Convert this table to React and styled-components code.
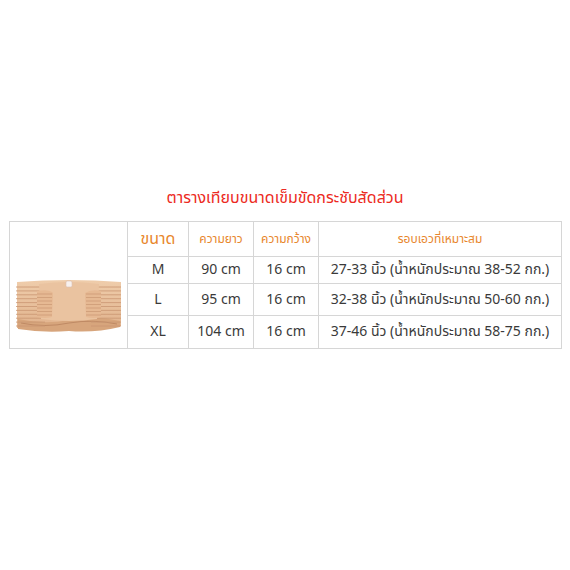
import React from "react";
import styled, { createGlobalStyle } from "styled-components";

const Global = createGlobalStyle`
  html, body { margin: 0; padding: 0; background: #ffffff; }
  body { font-family: "Noto Sans Thai", "Noto Sans", "DejaVu Sans", sans-serif; }
`;

const Page = styled.div`
  width: 570px;
  height: 570px;
  display: flex;
  flex-direction: column;
  align-items: stretch;
  padding: 187px 9px 0 9px;
  box-sizing: border-box;
`;

const Title = styled.h1`
  margin: 0 0 12px 0;
  font-size: 16px;
  line-height: 22px;
  font-weight: 400;
  color: #ec2a22;
  text-align: center;
`;

const Table = styled.table`
  width: 552px;
  border-collapse: collapse;
  table-layout: fixed;
  border: 1px solid #dcdcdc;
`;

const Cell = styled.td`
  border: 1px solid #d6d6d6;
  padding: 0;
  text-align: center;
  vertical-align: middle;
  color: #3a3a3a;
  font-size: 14px;
  font-weight: 400;
  line-height: 18px;
  height: ${(p) => p.$h}px;
  box-sizing: border-box;
  white-space: nowrap;
`;

const HeadCell = styled(Cell)`
  color: #e8862c;
  font-size: ${(p) => (p.$big ? 16 : 12)}px;
`;

const ImageCell = styled.td`
  border: 1px solid #d6d6d6;
  padding: 0;
  vertical-align: bottom;
  text-align: center;
`;

const BeltBox = styled.div`
  display: flex;
  justify-content: center;
  padding: 0 0 14px 0;
`;

function Belt() {
  const stripes = [];
  for (let i = 0; i < 11; i++) {
    const y = 11 + i * 3.9;
    stripes.push(
      <line key={"l" + i} x1="1" y1={y} x2="30" y2={y} stroke="#c99672" strokeWidth="0.8" />,
      <line key={"r" + i} x1="76" y1={y} x2="106" y2={y} stroke="#c99672" strokeWidth="0.8" />
    );
  }
  return (
    <svg width="108" height="58" viewBox="0 0 108 58">
      <defs>
        <linearGradient id="bg" x1="0" y1="0" x2="0" y2="1">
          <stop offset="0" stopColor="#efcdab" />
          <stop offset="1" stopColor="#e0b18b" />
        </linearGradient>
      </defs>
      <path d="M2 6 Q54 2 106 6 L106 50 Q80 56 54 54 Q28 56 2 52 Z" fill="url(#bg)" />
      <path d="M3 43 Q30 49 54 44 Q80 39 105 45 L105 51 Q80 57 54 55 Q28 57 3 53 Z" fill="#d7a57c" />
      <path d="M6 47 Q30 52 54 47 Q78 43 102 48" stroke="#b9835e" strokeWidth="0.8" fill="none" />
      {stripes}
      <path d="M24 8 Q54 4 84 8 L82 43 Q54 47 26 43 Z" fill="#eac3a0" />
      <path d="M22 15 Q34 13 38 17 L37 41 Q30 43 22 41 Z" fill="#e6b993" />
      <path d="M70 17 Q76 13 86 15 L86 41 Q78 43 71 41 Z" fill="#e6b993" />
      {[0, 1, 2, 3, 4, 5, 6].map((i) => (
        <g key={i}>
          <line x1="22" y1={18 + i * 3.5} x2="37" y2={18 + i * 3.5} stroke="#c99672" strokeWidth="0.7" />
          <line x1="71" y1={18 + i * 3.5} x2="86" y2={18 + i * 3.5} stroke="#c99672" strokeWidth="0.7" />
        </g>
      ))}
      <rect x="51" y="5" width="6" height="6" rx="1.5" fill="#f8f1ee" stroke="#d9bfb5" strokeWidth="0.6" />
    </svg>
  );
}

const rows = [
  { size: "M", len: "90 cm", wid: "16 cm", fit: "27-33 นิ้ว (น้ำหนักประมาณ 38-52 กก.)", h: 27 },
  { size: "L", len: "95 cm", wid: "16 cm", fit: "32-38 นิ้ว (น้ำหนักประมาณ 50-60 กก.)", h: 32 },
  { size: "XL", len: "104 cm", wid: "16 cm", fit: "37-46 นิ้ว (น้ำหนักประมาณ 58-75 กก.)", h: 33 },
];

export default function App() {
  return (
    <>
      <Global />
      <Page>
        <Title>ตารางเทียบขนาดเข็มขัดกระชับสัดส่วน</Title>
        <Table>
          <colgroup>
            <col style={{ width: 118 }} />
            <col style={{ width: 61 }} />
            <col style={{ width: 65 }} />
            <col style={{ width: 65 }} />
            <col style={{ width: 243 }} />
          </colgroup>
          <tbody>
            <tr>
              <ImageCell rowSpan={4}>
                <BeltBox>
                  <Belt />
                </BeltBox>
              </ImageCell>
              <HeadCell as="th" $h={35} $big>ขนาด</HeadCell>
              <HeadCell as="th" $h={35}>ความยาว</HeadCell>
              <HeadCell as="th" $h={35}>ความกว้าง</HeadCell>
              <HeadCell as="th" $h={35}>รอบเอวที่เหมาะสม</HeadCell>
            </tr>
            {rows.map((r) => (
              <tr key={r.size}>
                <Cell $h={r.h}>{r.size}</Cell>
                <Cell $h={r.h}>{r.len}</Cell>
                <Cell $h={r.h}>{r.wid}</Cell>
                <Cell $h={r.h}>{r.fit}</Cell>
              </tr>
            ))}
          </tbody>
        </Table>
      </Page>
    </>
  );
}
